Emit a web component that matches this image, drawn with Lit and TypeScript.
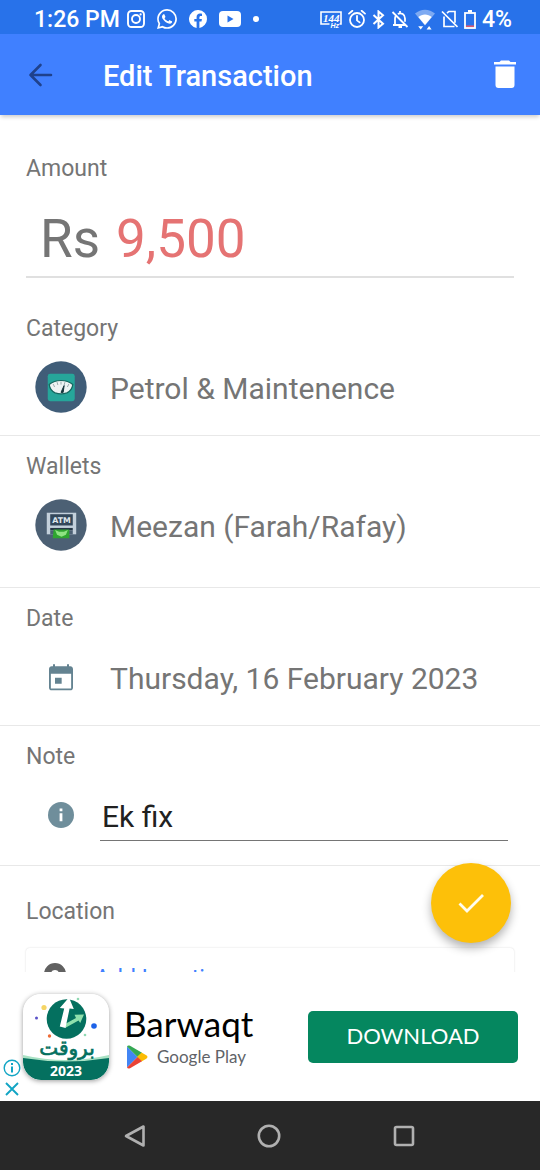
import { LitElement, html, css, svg } from "lit";
import { customElement, state } from "lit/decorators.js";

const statusIcons = {
  instagram: html`<svg width="18" height="18" viewBox="0 0 18 18" fill="none" stroke="#fff" stroke-width="1.9" aria-hidden="true">
    <rect x="1" y="1" width="16" height="16" rx="3.5" /><circle cx="9" cy="9" r="4" /><circle cx="13.6" cy="4.4" r="1.1" fill="#fff" stroke="none" /></svg>`,
  whatsapp: html`<svg width="20" height="20" viewBox="0 0 24 24" fill="#fff" aria-hidden="true">
    <path d="M17.47 14.38c-.3-.15-1.76-.87-2.03-.97-.27-.1-.47-.15-.67.15-.2.3-.77.97-.94 1.16-.17.2-.35.22-.64.08-.3-.15-1.26-.46-2.39-1.48-.88-.79-1.48-1.76-1.65-2.06-.17-.3-.02-.46.13-.6.13-.14.3-.35.45-.53.15-.17.2-.3.3-.5.1-.2.05-.37-.03-.52-.07-.15-.67-1.61-.91-2.2-.25-.59-.49-.51-.67-.52h-.57c-.2 0-.52.07-.8.37-.27.3-1.04 1.02-1.04 2.48s1.07 2.88 1.21 3.07c.15.2 2.1 3.2 5.08 4.49.71.3 1.26.49 1.7.63.71.22 1.36.19 1.87.12.57-.09 1.76-.72 2-1.42.26-.69.26-1.29.18-1.41-.08-.12-.28-.2-.58-.34m-5.42 7.4a9.87 9.87 0 0 1-5.03-1.38l-.36-.21-3.74.98 1-3.65-.24-.37A9.86 9.86 0 0 1 12.05 2.1a9.85 9.85 0 0 1 9.88 9.89 9.88 9.88 0 0 1-9.88 9.79m8.41-18.3A11.82 11.82 0 0 0 12.05 0C5.5 0 .16 5.34.16 11.9c0 2.1.55 4.14 1.59 5.94L.06 24l6.3-1.65a11.9 11.9 0 0 0 5.69 1.45c6.55 0 11.89-5.34 11.89-11.9a11.82 11.82 0 0 0-3.48-8.42" /></svg>`,
  facebook: html`<svg width="18" height="18" viewBox="0 0 24 24" fill="#fff" aria-hidden="true">
    <path d="M24 12a12 12 0 1 0-13.88 11.85v-8.38H7.08V12h3.04V9.36c0-3 1.8-4.67 4.54-4.67 1.31 0 2.68.24 2.68.24v2.95h-1.51c-1.49 0-1.95.93-1.95 1.87V12h3.32l-.53 3.47h-2.8v8.38A12 12 0 0 0 24 12z" /></svg>`,
  youtube: html`<svg width="22" height="16" viewBox="0 0 22 16" aria-hidden="true">
    <rect width="22" height="16" rx="4" fill="#fff" /><path d="M8.5 4.6v6.8l6-3.4z" fill="#2872ea" /></svg>`,
  alarm: html`<svg width="18" height="18" viewBox="0 0 18 18" fill="none" stroke="#fff" stroke-width="1.8" stroke-linecap="round" aria-hidden="true">
    <circle cx="9" cy="10" r="7" /><path d="M9 6v4.400l2.600 2M1 3.600l3.400-2.800M17 3.600L13.600 .8" /></svg>`,
  bluetooth: html`<svg width="13" height="19" viewBox="0 0 13 19" fill="none" stroke="#fff" stroke-width="2" aria-hidden="true">
    <path d="M1.500 5l9.500 8.800-4.500 3.700v-16L11 5.200 1.500 14" /></svg>`,
  bell: html`<svg width="18" height="19" viewBox="0 0 18 19" fill="none" stroke="#fff" stroke-width="1.800" aria-hidden="true">
    <path d="M1.500 2l15 15M2 15h12M4 15V8.500c0-1 .3-2 .9-2.800M6.800 3.900c3.700-1.700 7.200.6 7.200 4.600v3.200M9 1v2.500" /><path d="M7.500 17h3.500" stroke-width="2" /></svg>`,
  wifi: html`<svg width="20" height="21" viewBox="0 0 20 21" fill="#fff" aria-hidden="true">
    <path d="M0 4.500C5.800-.6 14.200-.6 20 4.500L10 16.500z" opacity=".4" /><path d="M3.300 8C7 4.600 13 4.600 16.700 8L10 16z" /><path d="M3.200 17.200h5L5.700 20.500zM11.600 20.500h5L14.100 17z" /></svg>`,
  sim: html`<svg width="17" height="18" viewBox="0 0 17 18" fill="none" stroke="#fff" stroke-width="1.700" aria-hidden="true">
    <path d="M1 1.500l15.500 15.500M6 3.200L7.800 1.500H14v11.300M3 6.500v10h10.500" /></svg>`,
  battery: html`<svg width="12" height="19" viewBox="0 0 12 19" fill="none" aria-hidden="true">
    <path d="M4 0h4v2.500H4z" fill="#fff" /><rect x="1" y="3" width="10" height="15" stroke="#fff" stroke-width="1.800" /><path d="M2 16.200h8" stroke="#e4566c" stroke-width="1.500" /></svg>`,
};

@customElement("status-bar")
class StatusBar extends LitElement {
  static styles = css`
    :host {
      display: flex;
      align-items: center;
      justify-content: space-between;
      height: 34px;
      padding: 4px 28px 0 34px;
      box-sizing: border-box;
      background: #2872ea;
      color: #fff;
      font: 500 23px/28px Roboto, sans-serif;
    }
    .apps, .system { display: flex; align-items: center; }
    .apps { gap: 12px; }
    .system { gap: 6px; }
    .clock, .level { padding-top: 2px; }
    .clock { margin-right: -5px; }
    .dot { width: 6px; height: 6px; border-radius: 50%; background: #fff; }
    .rate { font: italic 700 11px "Liberation Serif", serif; fill: #fff; }
    .unit { font: italic 700 7px "Liberation Sans", sans-serif; fill: #fff; }
    svg { flex: none; }
  `;
  render() {
    const i = statusIcons;
    return html`
      <div class="apps">
        <span class="clock">1:26 PM</span>
        ${i.instagram}${i.whatsapp}${i.facebook}${i.youtube}
        <span class="dot"></span>
      </div>
      <div class="system">
        <svg width="22" height="18" viewBox="0 0 22 18" aria-hidden="true">
          <path d="M9.500 14H1V2h20v12h-1.500" fill="none" stroke="#fff" stroke-width="1.600" />
          <text class="rate" x="3" y="11.500">144</text>
          <text class="unit" x="10.500" y="17.500">Hz</text>
        </svg>
        ${i.alarm}${i.bluetooth}${i.bell}${i.wifi}${i.sim}${i.battery}
        <span class="level">4%</span>
      </div>
    `;
  }
}

@customElement("ad-banner")
class AdBanner extends LitElement {
  static styles = css`
    :host {
      position: relative;
      display: flex;
      align-items: center;
      gap: 15px;
      height: 129px;
      padding: 0 22px 0 23px;
      box-sizing: border-box;
      background: #fff;
    }
    .app-icon {
      flex: none;
      width: 86px;
      height: 86px;
      border-radius: 18px;
      box-shadow: 0 1px 5px rgba(0, 0, 0, 0.4);
    }
    .brand { font: 400 20px "DejaVu Sans", sans-serif; fill: #04705f; stroke: #04705f; stroke-width: 0.7; }
    .year { font: 700 14px "Open Sans", sans-serif; fill: #fff; }
    .info { flex: 1; display: flex; flex-direction: column; gap: 2px; }
    .name { font: 400 35px/38px Lato, sans-serif; color: #000; }
    .store {
      display: flex;
      align-items: center;
      gap: 9px;
      padding-left: 2px;
      font: 400 17px/26px Lato, sans-serif;
      color: #5f6368;
      white-space: nowrap;
    }
    .download {
      width: 210px;
      height: 52px;
      padding: 0 0 2px;
      border: 0;
      border-radius: 5px;
      background: #05875f;
      color: #fff;
      font: 400 22px/28px Lato, sans-serif;
    }
    .choices {
      position: absolute;
      left: 3px;
      bottom: 3px;
      display: grid;
      gap: 3px;
    }
    .choice { display: block; padding: 0; border: 0; background: none; height: 18px; }
    svg { display: block; }
  `;
  render() {
    return html`
      <svg class="app-icon" viewBox="0 0 86 86" role="img" aria-label="Barwaqt">
        <defs><clipPath id="round"><rect width="86" height="86" rx="18" /></clipPath></defs>
        <g clip-path="url(#round)">
          <rect width="86" height="86" fill="#fff" />
          <path d="M0 61Q43 71 86 61V72H0z" fill="#a9e2c4" />
          <path d="M0 64Q43 71 86 64V86H0z" fill="#04705f" />
          <circle cx="43.500" cy="25" r="19.800" fill="#04705f" />
          <path d="M43 29.500l10-5.500-1.500-3.200 9.500-.3-3.800 8.500-1.700-2.500L42 34z" fill="#8fe0ac" />
          <path d="M36.800 32.500l4.400-18-4.400-.5L46 3.500l4.800 11.500-4.200-.6L42.500 34z" fill="#fff" />
          <circle cx="21" cy="13.500" r="2.600" fill="#f5d565" />
          <circle cx="13.500" cy="24" r="1.500" fill="#5a52c8" />
          <circle cx="71" cy="32" r="2.800" fill="#1d62e8" />
          <circle cx="26.500" cy="42" r="1.700" fill="#ee6b35" />
          <circle cx="55" cy="5" r="1.300" fill="#8fd9b2" />
          <circle cx="62" cy="41" r="1.300" fill="#8fd9b2" />
          <text class="brand" x="44" y="61" text-anchor="middle">بروقت</text>
          <text class="year" x="43" y="82" text-anchor="middle">2023</text>
        </g>
      </svg>
      <div class="info">
        <div class="name">Barwaqt</div>
        <div class="store">
          <svg width="22" height="24" viewBox="0 0 22 24" aria-hidden="true">
            <path d="M1 1.500v21L11.500 12z" fill="#4285f4" />
            <path d="M1 1.500C1.500.3 2.700.1 4 .8l12 7L11.500 12z" fill="#34a853" />
            <path d="M15.500 7.500l4.800 2.800c1.600.9 1.600 2.500 0 3.400l-4.800 2.800L11 12z" fill="#fbbc04" />
            <path d="M1 22.500c.5 1.200 1.700 1.400 3 .7l12-7L11.500 12z" fill="#ea4335" />
          </svg>
          Google Play
        </div>
      </div>
      <button class="download">DOWNLOAD</button>
      <div class="choices">
        <button class="choice" aria-label="Ad information">
          <svg width="18" height="18" viewBox="0 0 18 18" fill="none" stroke="#12a5c4" aria-hidden="true">
            <circle cx="9" cy="9" r="7.800" stroke-width="1.400" /><path d="M9 7.500v6M9 4v2" stroke-width="2" />
          </svg>
        </button>
        <button class="choice" aria-label="Close ad">
          <svg width="18" height="18" viewBox="0 0 18 18" fill="none" stroke="#12a5c4" stroke-width="1.900" aria-hidden="true">
            <path d="M3 3l12 12M15 3L3 15" />
          </svg>
        </button>
      </div>
    `;
  }
}

@customElement("system-nav")
class SystemNav extends LitElement {
  static styles = css`
    :host {
      display: flex;
      justify-content: space-evenly;
      align-items: center;
      height: 69px;
      padding-right: 2px;
      background: #282828;
    }
    .key { width: 0; display: flex; justify-content: center; padding: 0; border: 0; background: none; }
    svg { flex: none; fill: none; stroke: #b0b0b0; stroke-width: 2.600; }
  `;
  render() {
    const key = (label: string, shape: unknown) => html`
      <button class="key" aria-label=${label}>
        <svg width="24" height="24" viewBox="0 0 24 24">${shape}</svg>
      </button>`;
    return html`
      ${key("Back", svg`<path d="M20.500 2.500v19L3 12z" stroke-linejoin="round" />`)}
      ${key("Home", svg`<circle cx="12" cy="12" r="10.200" />`)}
      ${key("Recent apps", svg`<rect x="3" y="3" width="18" height="18" rx="1.500" />`)}
    `;
  }
}

@customElement("app-root")
class AppRoot extends LitElement {
  @state() private amount = "9,500";
  @state() private note = "Ek fix";

  static styles = css`
    :host {
      display: flex;
      flex-direction: column;
      height: 100vh;
      background: #fff;
      color: #757575;
      font: 400 30px/40px Roboto, sans-serif;
    }
    button, input {
      font: inherit;
      color: inherit;
      border: 0;
      padding: 0;
      margin: 0;
      background: none;
      text-align: left;
      outline: none;
      min-width: 0;
    }
    svg { display: block; flex: none; }
    .toolbar {
      display: flex;
      align-items: center;
      height: 81px;
      padding: 0 22px 0 26px;
      background: #4080ff;
      color: #fff;
      box-shadow: 0 3px 4px -1px rgba(0, 0, 0, 0.2);
      position: relative;
      z-index: 1;
    }
    .title { flex: 1; margin: 0 0 0 49px; padding-top: 3px; font-size: 29px; font-weight: 500; }
    .body { position: relative; flex: 1; min-height: 0; }
    .scroll { height: 100%; overflow-y: auto; scrollbar-width: none; }
    .section { padding: 17px 26px 22px; border-bottom: 1px solid #e8e8e8; }
    .amount-section { padding: 40px 26px 20px; border: 0; }
    .roomy { padding-bottom: 36px; }
    .note-section { padding-bottom: 24px; }
    .location-section { padding-top: 32px; border: 0; }
    .label { display: block; font-size: 23px; line-height: 28px; }
    .amount {
      display: flex;
      gap: 16px;
      margin-top: 24px;
      padding: 0 14px 5px;
      border-bottom: 2px solid #e0e0e0;
      font-size: 53px;
      line-height: 64px;
    }
    .amount-input { flex: 1; height: 64px; color: #e57373; }
    .row {
      display: flex;
      align-items: center;
      gap: 23px;
      width: 100%;
      min-height: 52px;
      margin-top: 18px;
      padding-left: 8px;
      box-sizing: border-box;
    }
    .slot { flex: none; width: 53px; display: flex; justify-content: center; }
    .value { padding-top: 4px; }
    .note-row { gap: 13px; padding-right: 6px; }
    .note-input {
      flex: 1;
      height: 51px;
      padding: 4px 2px 0;
      box-sizing: border-box;
      border-bottom: 1px solid #757575;
      color: #212121;
    }
    .atm { font: 700 8px "DejaVu Sans", sans-serif; fill: #dfe6ec; }
    .card {
      display: flex;
      align-items: flex-start;
      gap: 27px;
      width: 100%;
      height: 72px;
      margin-top: 22px;
      padding: 15px 16px;
      border-radius: 4px;
      box-shadow: 0 0 2px rgba(0, 0, 0, 0.16);
      color: #4080ff;
      font-size: 23px;
      line-height: 28px;
      box-sizing: border-box;
    }
    .card-text { padding-top: 2px; }
    .fab {
      position: absolute;
      right: 29px;
      bottom: 29px;
      width: 80px;
      height: 80px;
      border-radius: 50%;
      background: #fdc009;
      box-shadow: 0 5px 10px rgba(0, 0, 0, 0.3);
      display: grid;
      place-items: center;
    }
  `;

  render() {
    return html`
      <status-bar></status-bar>
      <header class="toolbar">
        <button aria-label="Back">
          <svg width="28" height="28" viewBox="0 0 28 28" fill="none" stroke="#1f418c" stroke-width="2.600" stroke-linecap="round" stroke-linejoin="round">
            <path d="M25 14H4.500M14.500 4L4.500 14l10 10" />
          </svg>
        </button>
        <h1 class="title">Edit Transaction</h1>
        <button aria-label="Delete">
          <svg width="26" height="32" viewBox="0 0 26 32" fill="#fff">
            <path d="M2 3h5.500L9 1.500h8L18.500 3H24v2.500H2zM3.500 7.500h19V26a3 3 0 0 1-3 3h-13a3 3 0 0 1-3-3z" />
          </svg>
        </button>
      </header>
      <main class="body">
        <div class="scroll">
          <section class="section amount-section">
            <label class="label" for="amount">Amount</label>
            <div class="amount">
              <span>Rs</span>
              <input id="amount" class="amount-input" .value=${this.amount}
                @input=${(e: Event) => (this.amount = (e.target as HTMLInputElement).value)} />
            </div>
          </section>
          <section class="section">
            <label class="label" for="category">Category</label>
            <button id="category" class="row">
              <span class="slot">
                <svg width="52" height="52" viewBox="0 0 53 53" aria-hidden="true">
                  <circle cx="26.500" cy="26.500" r="26.200" fill="#405d78" />
                  <rect x="13" y="13" width="27.500" height="28" rx="2.500" fill="#26a69a" />
                  <path d="M14.500 24C21 18.500 32 18.500 38.500 24c-.5 3.500-3 7-6 8.500-4 1.400-8 1.400-12 0-3-1.500-5.500-5-6-8.500z" fill="#eef3f3" stroke="#14675f" stroke-width="1.200" />
                  <path d="M18.500 23.500l1.500 3M22.500 21.500l.8 3M26.500 21v3M30.500 21.500l-.8 3M34.500 23.500l-1.500 3" stroke="#9aa8ab" stroke-width="1" />
                  <path d="M26.500 32l3.200-7-1 7z" fill="#17343b" stroke="#17343b" />
                </svg>
              </span>
              <span class="value">Petrol &amp; Maintenence</span>
            </button>
          </section>
          <section class="section roomy">
            <label class="label" for="wallet">Wallets</label>
            <button id="wallet" class="row">
              <span class="slot">
                <svg width="52" height="52" viewBox="0 0 53 53" aria-hidden="true">
                  <circle cx="26.500" cy="26.500" r="26.200" fill="#4c6074" />
                  <path d="M12 14h30v22H12z" fill="#c3d0db" />
                  <path d="M15.500 15.500h23v11.500h-23z" fill="#33475a" />
                  <path d="M15.500 29.500h23v2.500h-23z" fill="#263746" />
                  <path d="M15.500 32h23v4h-23z" fill="#4c6074" />
                  <text class="atm" x="27" y="24" text-anchor="middle">ATM</text>
                  <path d="M19 31h16v9H18z" fill="#2fa530" />
                  <path d="M20.500 31.500l2 5 4.500 2 4.500-2 2-5-4 2h-5z" fill="#8fe382" />
                </svg>
              </span>
              <span class="value">Meezan (Farah/Rafay)</span>
            </button>
          </section>
          <section class="section">
            <label class="label" for="date">Date</label>
            <button id="date" class="row">
              <span class="slot">
                <svg width="32" height="32" viewBox="0 0 24 24" fill="#648391" aria-hidden="true">
                  <path fill-rule="evenodd" d="M19 4h-1V2.500h-1.500V4h-9V2.500H6V4H5c-1.100 0-2 .9-2 2v14c0 1.100.9 2 2 2h14c1.100 0 2-.9 2-2V6c0-1.100-.9-2-2-2zm.6 16.600H4.400V9.500h15.200zM7.500 12.500h5V17h-5z" />
                </svg>
              </span>
              <span class="value">Thursday, 16 February 2023</span>
            </button>
          </section>
          <section class="section note-section">
            <label class="label" for="note">Note</label>
            <div class="row note-row">
              <span class="slot">
                <svg width="26" height="26" viewBox="0 0 26 26" aria-hidden="true">
                  <circle cx="13" cy="13" r="13" fill="#6f8e9b" />
                  <path d="M11.600 6.500h2.800v2.800h-2.800zM11.600 11.300h2.800v8h-2.800z" fill="#fff" />
                </svg>
              </span>
              <input id="note" class="note-input" .value=${this.note}
                @input=${(e: Event) => (this.note = (e.target as HTMLInputElement).value)} />
            </div>
          </section>
          <section class="section location-section">
            <label class="label" for="location">Location</label>
            <button id="location" class="card">
              <svg width="26" height="42" viewBox="0 0 26 42" aria-hidden="true">
                <path d="M13 0a11 11 0 0 0-11 11c0 8 11 21 11 21s11-13 11-21A11 11 0 0 0 13 0zm0 15a4 4 0 1 1 0-8 4 4 0 0 1 0 8z" fill="#616161" />
              </svg>
              <span class="card-text">Add Location</span>
            </button>
          </section>
        </div>
        <button class="fab" aria-label="Save">
          <svg width="28" height="22" viewBox="0 0 28 22" fill="none" stroke="#fffdf0" stroke-width="2.800" aria-hidden="true">
            <path d="M2.500 11.500l7.500 7.500L26 3" />
          </svg>
        </button>
      </main>
      <ad-banner></ad-banner>
      <system-nav></system-nav>
    `;
  }
}
